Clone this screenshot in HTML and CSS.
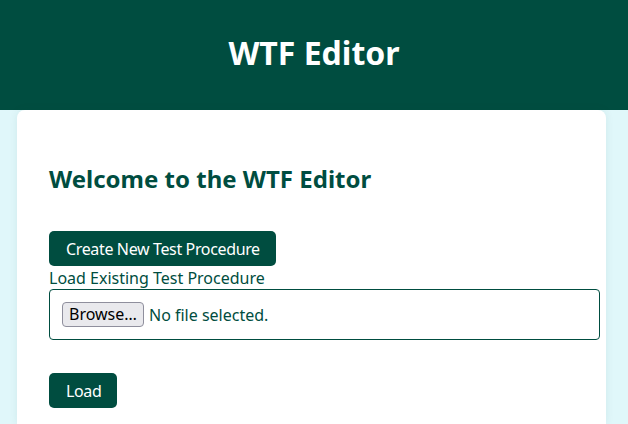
FILE: index.html
```html
<!DOCTYPE html>
<html>
<head>
<meta charset="utf-8">
<link rel="stylesheet" href="styles.css">
</head>
<body>
<header class="top">
  <h1 class="title">WTF Editor</h1>
</header>
<main class="card">
  <h2 class="welcome">Welcome to the WTF Editor</h2>
  <button class="btn">Create New Test Procedure</button>
  <label class="lbl">Load Existing Test Procedure</label>
  <div class="file">
    <span class="browse">Browse…</span>
    <span class="nofile">No file selected.</span>
  </div>
  <button class="btn load">Load</button>
</main>
</body>
</html>
```
FILE: styles.css
```css
* { box-sizing: border-box; }
html, body { margin: 0; padding: 0; }
body {
  background: #e0f7fa;
  font-family: "Noto Sans", sans-serif;
  color: #004d40;
  height: 424px;
  overflow: hidden;
}
.top {
  background: #004d40;
  height: 110px;
  padding-bottom: 6px;
  display: flex;
  align-items: center;
  justify-content: center;
}
.title {
  margin: 0;
  color: #fff;
  font-size: 32px;
  font-weight: 700;
}
.card {
  background: #fff;
  margin: 0 22px 0 17px;
  padding: 32px;
  border-radius: 8px 8px 0 0;
  box-shadow: 0 0 8px rgba(0, 77, 64, 0.08);
  height: 314px;
  display: flex;
  flex-direction: column;
  align-items: flex-start;
}
.welcome {
  margin: 20px 0 36px;
  font-size: 24px;
  font-weight: 700;
  line-height: 33px;
}
.btn {
  background: #004d40;
  color: #fff;
  border: none;
  border-radius: 5px;
  font-family: "Noto Sans", sans-serif;
  font-size: 16px;
  letter-spacing: -0.36px;
  padding: 0 16px 0 17px;
  height: 35px;
  flex: none;
}
.lbl {
  font-size: 16px;
  line-height: 23px;
  padding-top: 1px;
  margin-bottom: -1px;
}
.file {
  width: 551px;
  height: 51px;
  flex: none;
  border: 1px solid #004d40;
  border-radius: 4px;
  padding: 0 12px;
  display: flex;
  align-items: center;
  gap: 5px;
  font-size: 16px;
}
.browse {
  background: #e9e9ed;
  border: 1px solid #8f8f9d;
  border-radius: 4px;
  color: #000;
  padding: 0 6px;
  height: 25px;
  line-height: 23px;
}
.nofile { color: #004d40; }
.load {
  margin-top: 33px;
}
```
